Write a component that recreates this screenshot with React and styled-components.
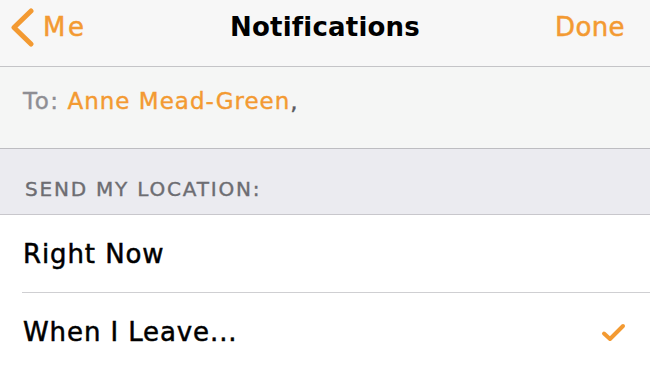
import styled, { createGlobalStyle } from "styled-components"

const orange = "#f39a32"

const GlobalStyle = createGlobalStyle`
    html, body {
        margin: 0;
        padding: 0;
        background: #ffffff;
        overflow: hidden;
    }
    body {
        font-family: "DejaVu Sans", "Liberation Sans", sans-serif;
        -webkit-font-smoothing: antialiased;
    }
`

export default function App(){
    const options = [
        { label: "Right Now", checked: false },
        { label: "When I Leave...", checked: true },
    ]

    return(
        <Screen>
            <GlobalStyle />
            <NavBar>
                <BackButton>
                    <svg width="26" height="40" viewBox="0 0 26 40">
                        <polyline points="22,4 5,20.5 22,37" fill="none" stroke={orange} strokeWidth="5" strokeLinecap="round" strokeLinejoin="round" />
                    </svg>
                    <span>Me</span>
                </BackButton>
                <Title>Notifications</Title>
                <DoneButton>Done</DoneButton>
            </NavBar>
            <ToRow>
                <ToLabel>To:</ToLabel>
                <Recipient>Anne Mead-Green</Recipient>
                <Comma>,</Comma>
            </ToRow>
            <SectionHeader>Send my location:</SectionHeader>
            <List>
                {options.map((option, index) => (
                    <Option key={option.label} last={index === options.length - 1}>
                        <span>{option.label}</span>
                        {option.checked &&
                            <svg width="25" height="21" viewBox="0 0 25 21">
                                <polyline points="3,11.5 9,17 22,4" fill="none" stroke={orange} strokeWidth="4" strokeLinecap="round" strokeLinejoin="round" />
                            </svg>
                        }
                    </Option>
                ))}
            </List>
        </Screen>
    )
}

const Screen = styled.div`
    width: 650px;
    height: 369px;
    display: flex;
    flex-direction: column;
    background-color: #ffffff;
    overflow: hidden;
`
const NavBar = styled.div`
    height: 67px;
    box-sizing: border-box;
    padding: 0 25px 13px 25px;
    display: grid;
    grid-template-columns: 1fr auto 1fr;
    align-items: center;
    background-color: #f7f7f7;
    border-bottom: 1px solid #c4c4c7;
    flex-shrink: 0;
`
const BackButton = styled.div`
    display: flex;
    align-items: center;
    gap: 8px;
    margin-left: -16px;
    color: ${orange};
    font-size: 26px;
    letter-spacing: 2.5px;
    -webkit-text-stroke: 0.5px ${orange};
    svg{
        display: block;
    }
`
const Title = styled.div`
    font-size: 26px;
    font-weight: bold;
    color: #000000;
    letter-spacing: 0.2px;
`
const DoneButton = styled.div`
    justify-self: end;
    font-size: 26px;
    color: ${orange};
    letter-spacing: 0.4px;
    -webkit-text-stroke: 0.5px ${orange};
`
const ToRow = styled.div`
    height: 82px;
    box-sizing: border-box;
    padding: 0 22px 13px 23px;
    display: flex;
    align-items: center;
    background-color: #f5f6f5;
    border-bottom: 1px solid #bdbdc1;
    font-size: 23px;
    flex-shrink: 0;
`
const ToLabel = styled.span`
    color: #8e8e93;
    margin-right: 8px;
    letter-spacing: 1.5px;
    -webkit-text-stroke: 0.4px #8e8e93;
`
const Recipient = styled.span`
    color: ${orange};
    letter-spacing: 1px;
    -webkit-text-stroke: 0.4px ${orange};
`
const Comma = styled.span`
    color: #5a5a5e;
    -webkit-text-stroke: 0.4px #5a5a5e;
`
const SectionHeader = styled.div`
    height: 66px;
    box-sizing: border-box;
    padding: 15px 25px 0 25px;
    display: flex;
    align-items: center;
    background-color: #ebebf0;
    border-bottom: 1px solid #c8c7cc;
    color: #6d6d72;
    font-size: 20px;
    letter-spacing: 1.8px;
    text-transform: uppercase;
    -webkit-text-stroke: 0.4px #6d6d72;
    flex-shrink: 0;
`
const List = styled.div`
    display: flex;
    flex-direction: column;
    padding-left: 22px;
    background-color: #ffffff;
`
const Option = styled.div`
    height: 78px;
    box-sizing: border-box;
    padding-right: 24px;
    display: flex;
    align-items: center;
    justify-content: space-between;
    border-bottom: ${props => props.last ? "none" : "1px solid #cfcfd2"};
    font-size: 26px;
    color: #000000;
    letter-spacing: 0.9px;
    -webkit-text-stroke: 0.5px #000000;
    flex-shrink: 0;
    span{
        margin-left: 1px;
    }
`
